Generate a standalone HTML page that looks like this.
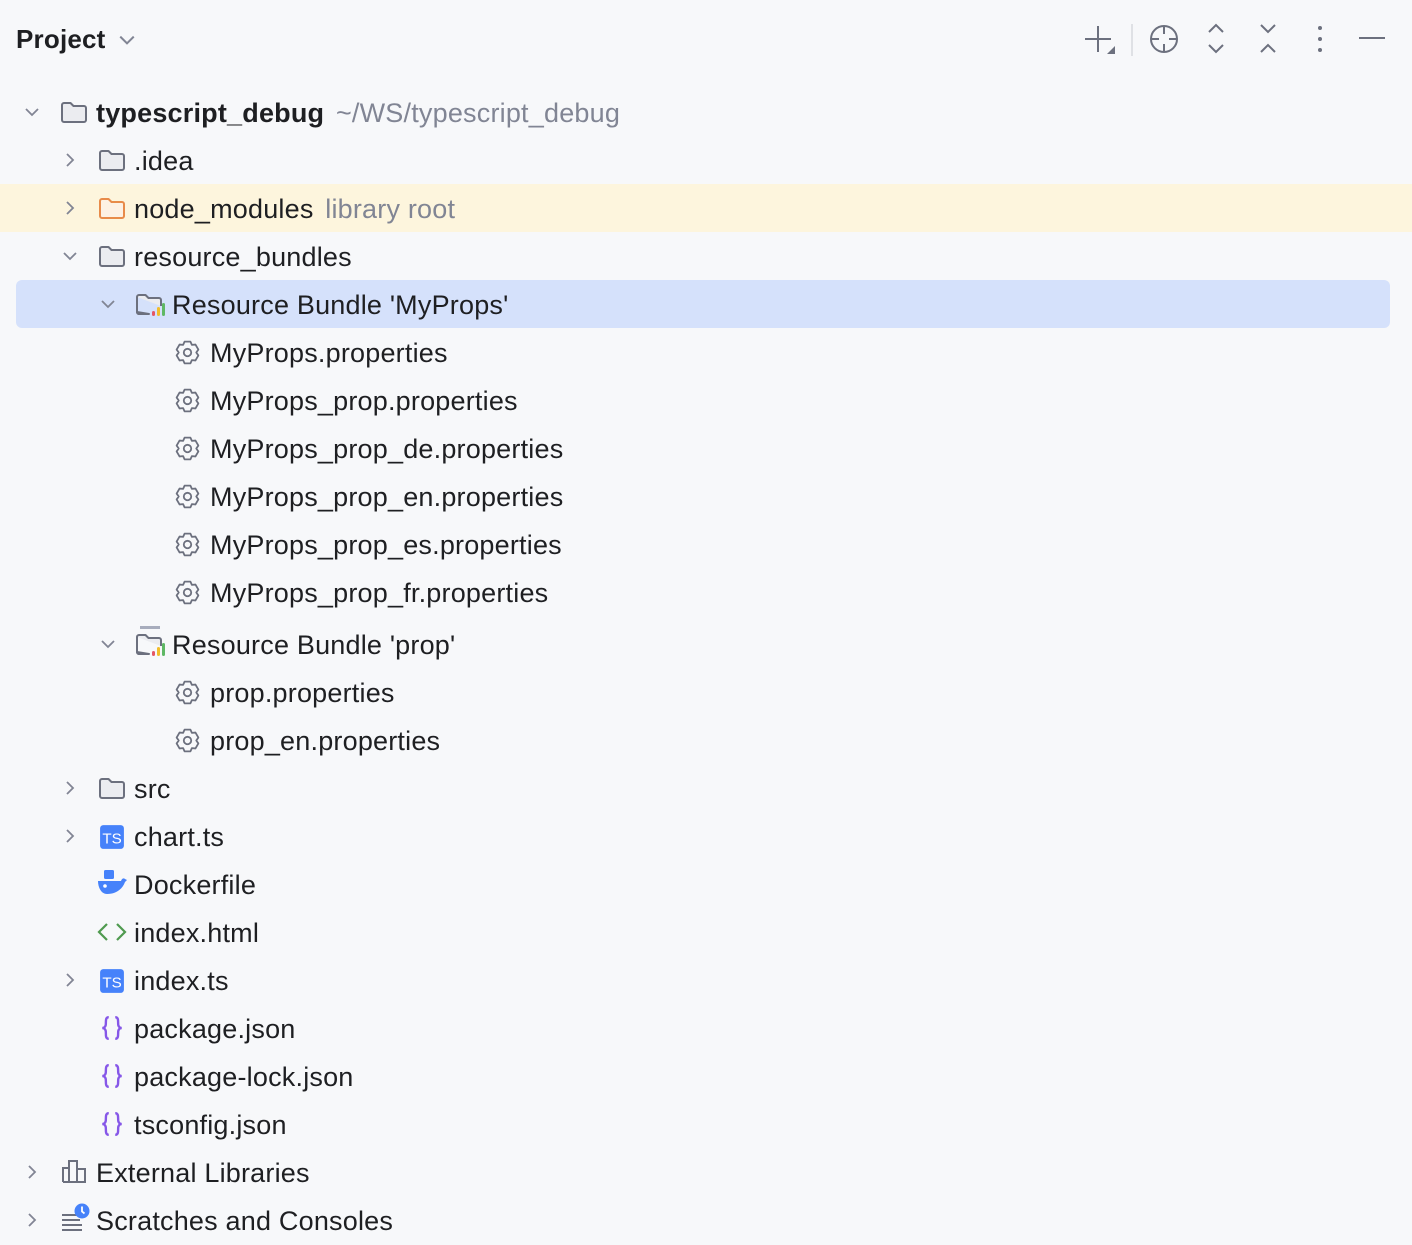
<!DOCTYPE html>
<html><head><meta charset="utf-8"><style>
html,body{margin:0;padding:0}
body{width:1412px;height:1240px;background:#f7f8fa;position:relative;overflow:hidden;font-family:"Liberation Sans",sans-serif;color:#1e1f22}
.r{position:absolute;left:0;right:0;height:48px}
.t{position:absolute;top:1px;line-height:48px;font-size:27px;white-space:nowrap;letter-spacing:0.2px}
.g{color:#818594}
svg{position:absolute}
</style></head><body>
<svg width="0" height="0" style="position:absolute">
<defs>
<symbol id="fold" viewBox="0 0 28 24"><path d="M2 5a2 2 0 0 1 2-2h6.5l3 3H24a2 2 0 0 1 2 2v12a2 2 0 0 1-2 2H4a2 2 0 0 1-2-2z" fill="#ebecf0" stroke="#6c707e" stroke-width="2" stroke-linejoin="round"/></symbol>
<symbol id="foldo" viewBox="0 0 28 24"><path d="M2 5a2 2 0 0 1 2-2h6.5l3 3H24a2 2 0 0 1 2 2v12a2 2 0 0 1-2 2H4a2 2 0 0 1-2-2z" fill="#fdf1e4" stroke="#e88b4a" stroke-width="2" stroke-linejoin="round"/></symbol>
<symbol id="cd" viewBox="0 0 16 16"><path d="M2 5l6 6 6-6" fill="none" stroke="#818594" stroke-width="1.8"/></symbol>
<symbol id="cr" viewBox="0 0 16 16"><path d="M5 2l6 6-6 6" fill="none" stroke="#818594" stroke-width="1.8"/></symbol>
<symbol id="gear" viewBox="0 0 24 24"><polygon points="9.41,2.34 14.59,2.34 15.9,5.25 19.07,4.93 21.66,9.41 19.8,12 21.66,14.59 19.07,19.07 15.9,18.75 14.59,21.66 9.41,21.66 8.1,18.75 4.93,19.07 2.34,14.59 4.2,12 2.34,9.41 4.93,4.93 8.1,5.25" fill="none" stroke="#6c707e" stroke-width="1.6" stroke-linejoin="round"/><circle cx="12" cy="12" r="3.3" fill="none" stroke="#6c707e" stroke-width="1.6"/></symbol>
<symbol id="rb" viewBox="0 0 32 28"><path d="M2 7a2 2 0 0 1 2-2h6.5l3 3H24a2 2 0 0 1 2 2v6M14 24H4a2 2 0 0 1-2-2z" fill="#ebecf0" stroke="#6c707e" stroke-width="2" stroke-linejoin="round"/><path d="M2 7v15a2 2 0 0 0 2 2h10" fill="none" stroke="#6c707e" stroke-width="2"/><rect x="17" y="21" width="3" height="5" rx="1.5" fill="#e55765"/><rect x="22" y="17" width="3" height="9" rx="1.5" fill="#f2bd2a"/><rect x="27" y="13" width="3" height="13" rx="1.5" fill="#5fb865"/></symbol>
<symbol id="ts" viewBox="0 0 24 24"><rect x="1" y="1" width="22" height="22" rx="3" fill="#4682fa"/><text x="12" y="18" font-family="Liberation Sans" font-size="14" fill="#fff" text-anchor="middle">TS</text></symbol>
<symbol id="json" viewBox="0 0 24 24"><path d="M9 2C5 2 7 8 6 10s-2 2-3 2c1 0 2 0 3 2s-1 8 3 8M15 2c4 0 2 6 3 8s2 2 3 2c-1 0-2 0-3 2s1 8-3 8" fill="none" stroke="#8657e8" stroke-width="2.2"/></symbol>
</defs></svg>

<div class="t" style="left:16px;top:15px;font-weight:bold;font-size:26px">Project</div>
<svg style="left:118px;top:31px" width="18" height="18"><use href="#cd"/></svg>

<svg style="left:1080px;top:20px" width="320" height="40" fill="none" stroke="#6c707e" stroke-width="2">
<path d="M18 6v26M5 19h26"/><path d="M35 26v8h-8z" fill="#6c707e" stroke="none"/>
<path d="M52 4v32" stroke="#dfe1e5"/>
<circle cx="84" cy="19" r="13"/><path d="M84 6v8M84 24v8M71 19h8M89 19h8"/>
<path d="M129 12l7-7 7 7M129 25l7 7 7-7"/>
<path d="M181 5l7 7 7-7M181 32l7-7 7 7"/>
<circle cx="240" cy="8" r="2" fill="#6c707e" stroke="none"/><circle cx="240" cy="19" r="2" fill="#6c707e" stroke="none"/><circle cx="240" cy="30" r="2" fill="#6c707e" stroke="none"/>
<path d="M279 18h26"/>
</svg>

<div style="position:absolute;left:0;right:0;top:184px;height:48px;background:#fdf5dd"></div>
<div style="position:absolute;left:16px;width:1374px;top:280px;height:48px;background:#d5e1fb;border-radius:6px"></div>

<div class="r" style="top:88px"><svg style="left:24px;top:16px" width="16" height="16"><use href="#cd"/></svg><svg style="left:60px;top:12px" width="28" height="24"><use href="#fold"/></svg><div class="t" style="left:96px;font-weight:bold">typescript_debug <span class="g" style="font-weight:normal;margin-left:4px">~/WS/typescript_debug</span></div></div>
<div class="r" style="top:136px"><svg style="left:62px;top:16px" width="16" height="16"><use href="#cr"/></svg><svg style="left:98px;top:12px" width="28" height="24"><use href="#fold"/></svg><div class="t" style="left:134px">.idea</div></div>
<div class="r" style="top:184px"><svg style="left:62px;top:16px" width="16" height="16"><use href="#cr"/></svg><svg style="left:98px;top:12px" width="28" height="24"><use href="#foldo"/></svg><div class="t" style="left:134px">node_modules <span class="g" style="margin-left:4px">library root</span></div></div>
<div class="r" style="top:232px"><svg style="left:62px;top:16px" width="16" height="16"><use href="#cd"/></svg><svg style="left:98px;top:12px" width="28" height="24"><use href="#fold"/></svg><div class="t" style="left:134px">resource_bundles</div></div>
<div class="r" style="top:280px"><svg style="left:100px;top:16px" width="16" height="16"><use href="#cd"/></svg><svg style="left:135px;top:10px" width="32" height="28"><use href="#rb"/></svg><div class="t" style="left:172px">Resource Bundle 'MyProps'</div></div>
<div class="r" style="top:328px"><svg style="left:174px;top:11px" width="27" height="27"><use href="#gear"/></svg><div class="t" style="left:210px">MyProps.properties</div></div>
<div class="r" style="top:376px"><svg style="left:174px;top:11px" width="27" height="27"><use href="#gear"/></svg><div class="t" style="left:210px">MyProps_prop.properties</div></div>
<div class="r" style="top:424px"><svg style="left:174px;top:11px" width="27" height="27"><use href="#gear"/></svg><div class="t" style="left:210px">MyProps_prop_de.properties</div></div>
<div class="r" style="top:472px"><svg style="left:174px;top:11px" width="27" height="27"><use href="#gear"/></svg><div class="t" style="left:210px">MyProps_prop_en.properties</div></div>
<div class="r" style="top:520px"><svg style="left:174px;top:11px" width="27" height="27"><use href="#gear"/></svg><div class="t" style="left:210px">MyProps_prop_es.properties</div></div>
<div class="r" style="top:568px"><svg style="left:174px;top:11px" width="27" height="27"><use href="#gear"/></svg><div class="t" style="left:210px">MyProps_prop_fr.properties</div></div>
<div class="r" style="top:620px"><svg style="left:100px;top:16px" width="16" height="16"><use href="#cd"/></svg><div style="position:absolute;left:140px;top:6px;width:20px;height:3px;background:#a8adbd"></div><svg style="left:135px;top:10px" width="32" height="28"><use href="#rb"/></svg><div class="t" style="left:172px">Resource Bundle 'prop'</div></div>
<div class="r" style="top:668px"><svg style="left:174px;top:11px" width="27" height="27"><use href="#gear"/></svg><div class="t" style="left:210px">prop.properties</div></div>
<div class="r" style="top:716px"><svg style="left:174px;top:11px" width="27" height="27"><use href="#gear"/></svg><div class="t" style="left:210px">prop_en.properties</div></div>
<div class="r" style="top:764px"><svg style="left:62px;top:16px" width="16" height="16"><use href="#cr"/></svg><svg style="left:98px;top:12px" width="28" height="24"><use href="#fold"/></svg><div class="t" style="left:134px">src</div></div>
<div class="r" style="top:812px"><svg style="left:62px;top:16px" width="16" height="16"><use href="#cr"/></svg><svg style="left:99px;top:12px" width="26" height="26"><use href="#ts"/></svg><div class="t" style="left:134px">chart.ts</div></div>
<div class="r" style="top:860px"><svg style="left:97px;top:10px" width="30" height="26" viewBox="0 0 30 26"><rect x="7" y="0" width="10" height="9" rx="1.5" fill="#4682fa"/><path d="M1 11h23c1-3 3-3 4-2l2 1-2 2c-2 6-8 12-18 12C4 24 1 17 1 11z" fill="#4682fa"/><circle cx="8" cy="16" r="1.8" fill="#fff"/></svg><div class="t" style="left:134px">Dockerfile</div></div>
<div class="r" style="top:908px"><svg style="left:97px;top:13px" width="30" height="22" fill="none" stroke="#4f9a4f" stroke-width="2.2"><path d="M10 3L2 11l8 8M20 3l8 8-8 8"/></svg><div class="t" style="left:134px">index.html</div></div>
<div class="r" style="top:956px"><svg style="left:62px;top:16px" width="16" height="16"><use href="#cr"/></svg><svg style="left:99px;top:12px" width="26" height="26"><use href="#ts"/></svg><div class="t" style="left:134px">index.ts</div></div>
<div class="r" style="top:1004px"><svg style="left:99px;top:11px" width="26" height="26"><use href="#json"/></svg><div class="t" style="left:134px">package.json</div></div>
<div class="r" style="top:1052px"><svg style="left:99px;top:11px" width="26" height="26"><use href="#json"/></svg><div class="t" style="left:134px">package-lock.json</div></div>
<div class="r" style="top:1100px"><svg style="left:99px;top:11px" width="26" height="26"><use href="#json"/></svg><div class="t" style="left:134px">tsconfig.json</div></div>
<div class="r" style="top:1148px"><svg style="left:24px;top:16px" width="16" height="16"><use href="#cr"/></svg><svg style="left:61px;top:10px" width="28" height="26" fill="none" stroke="#6c707e" stroke-width="2"><path d="M2 24V10h6v14M8 24V3h8v21M16 24V11h8v13zM2 24h22"/></svg><div class="t" style="left:96px">External Libraries</div></div>
<div class="r" style="top:1196px"><svg style="left:24px;top:16px" width="16" height="16"><use href="#cr"/></svg><svg style="left:61px;top:6px" width="30" height="32" fill="none"><path d="M1 13h15M1 18h18M1 23h20M1 28h20" stroke="#6c707e" stroke-width="2"/><circle cx="21" cy="9" r="7.5" fill="#4682fa"/><path d="M21 4.5v5l2.5 2" stroke="#fff" stroke-width="1.8"/></svg><div class="t" style="left:96px">Scratches and Consoles</div></div>
</body></html>
